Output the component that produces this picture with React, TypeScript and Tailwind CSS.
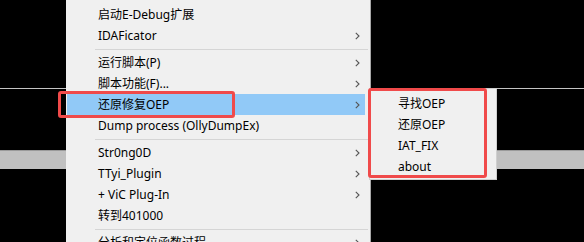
import React from "react";

const Chevron = () => (
  <svg width="5" height="8" viewBox="0 0 5 8" className="shrink-0">
    <path d="M0.8 0.8 L4 4 L0.8 7.2" fill="none" stroke="#555" strokeWidth="1.1" />
  </svg>
);

type Item = { label: string; sub?: boolean; hi?: boolean } | "sep";

const items: Item[] = [
  { label: "启动E-Debug扩展" },
  { label: "IDAFicator", sub: true },
  "sep",
  { label: "运行脚本(P)", sub: true },
  { label: "脚本功能(F)...", sub: true },
  { label: "还原修复OEP", sub: true, hi: true },
  { label: "Dump process (OllyDumpEx)" },
  "sep",
  { label: "Str0ng0D", sub: true },
  { label: "TTyi_Plugin", sub: true },
  { label: "+ ViC Plug-In", sub: true },
  { label: "转到401000" },
  "sep",
  { label: "分析和定位函数过程", sub: true },
];

const subItems = ["寻找OEP", "还原OEP", "IAT_FIX", "about"];

export default function App() {
  return (
    <div
      className="relative w-[584px] h-[242px] overflow-hidden bg-black text-[12px] text-black"
      style={{ fontFamily: '"Noto Sans", "Noto Sans CJK SC", sans-serif' }}
    >
      {/* background app */}
      <div className="flex flex-col">
        <div className="h-[88px]" />
        <div className="h-[1px] bg-[#c4c4c4]" />
        <div className="h-[61px]" />
        <div className="h-[19px] bg-[#c0c0c0] border-t border-[#9a9a9a]" />
      </div>

      {/* main menu */}
      <div className="absolute left-[66px] top-0 w-[305px] h-[260px] bg-[#f0f0f0] border-r border-[#a8a8a8] pt-[4px] flex flex-col">
        {items.map((it, i) =>
          it === "sep" ? (
            <div key={i} className="h-[6px] flex items-center ml-[29px] mr-[2px]">
              <div className="h-[1px] w-full bg-[#d5d5d5]" />
            </div>
          ) : (
            <div
              key={i}
              className={`h-[21px] shrink-0 ml-[1px] mr-[5px] pl-[31px] pr-[5px] flex items-center justify-between ${
                it.hi ? "bg-[#91c9f7]" : ""
              }`}
            >
              <span className="leading-none whitespace-nowrap">{it.label}</span>
              {it.sub ? <Chevron /> : null}
            </div>
          )
        )}
      </div>

      {/* submenu */}
      <div className="absolute left-[369px] top-[88px] w-[128px] h-[92px] bg-[#f0f0f0] border border-[#cfcfcf] pt-[4px] flex flex-col">
        {subItems.map((s) => (
          <div key={s} className="h-[21px] shrink-0 pl-[28px] flex items-center">
            <span className="leading-none whitespace-nowrap">{s}</span>
          </div>
        ))}
      </div>

      {/* annotation boxes */}
      <div className="absolute left-[58px] top-[91px] w-[177px] h-[27px] border-[3px] border-[#f04a4a] rounded-[3px]" />
      <div className="absolute left-[368px] top-[88px] w-[119px] h-[90px] border-[3px] border-[#f04a4a] rounded-[3px]" />
    </div>
  );
}
